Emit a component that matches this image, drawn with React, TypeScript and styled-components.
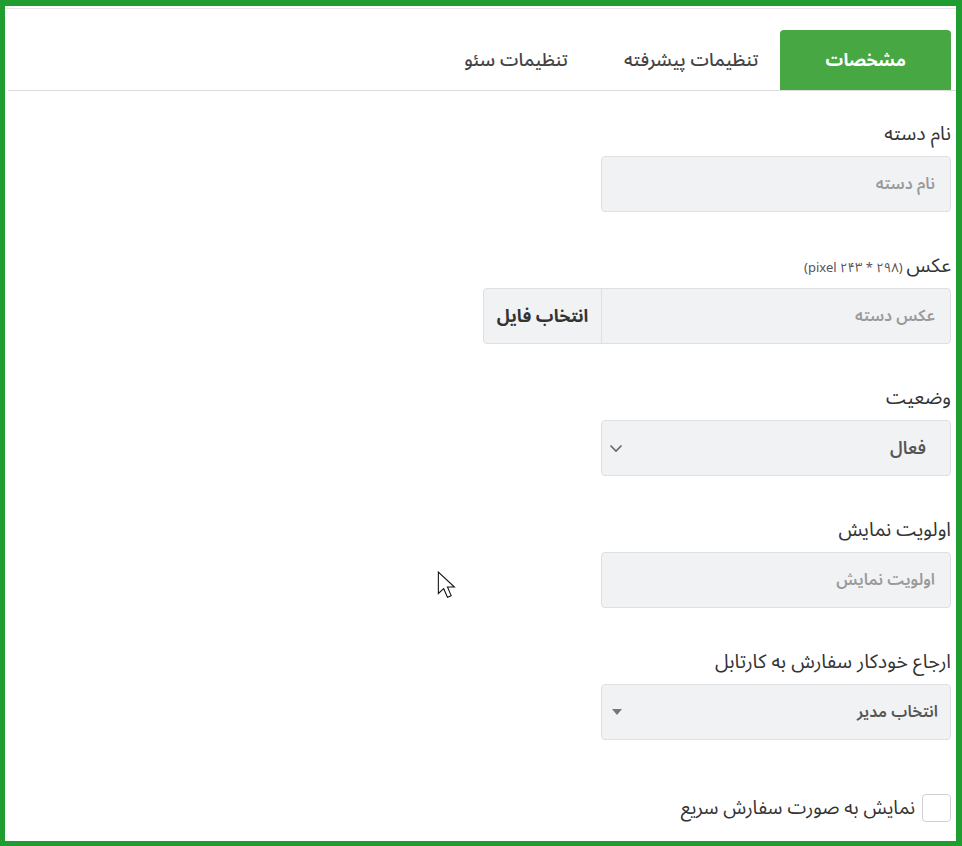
import * as React from 'react';
import styled, { createGlobalStyle } from 'styled-components';

const GlobalStyle = createGlobalStyle`
  html, body {
    margin: 0;
    padding: 0;
    background: #fff;
  }
  * {
    box-sizing: border-box;
  }
`;

const font = `"Noto Sans Arabic", "Noto Naskh Arabic", "DejaVu Sans", "Noto Sans", sans-serif`;

const Frame = styled.div`
  position: relative;
  width: 962px;
  height: 846px;
  border-style: solid;
  border-color: #1f9d30;
  border-width: 6px 6px 5px 5px;
  padding-top: 2px;
  overflow: hidden;
  font-family: ${font};
  direction: rtl;
`;

const Card = styled.div`
  border-top: 1px solid #e8e8e8;
  padding: 21px 5px 0 0;
`;

const TabBar = styled.div`
  display: flex;
  align-items: stretch;
  height: 61px;
  margin: 0 -5px 0 3px;
  padding-right: 5px;
  border-bottom: 1px solid #dcdcdc;
`;

const Tab = styled.div<{ $active?: boolean }>`
  display: flex;
  align-items: center;
  justify-content: center;
  height: 60px;
  padding: ${({ $active }) => ($active ? '0 45px' : '0 22px')};
  margin-left: ${({ $active }) => ($active ? '0' : '12px')};
  border-radius: 4px 4px 0 0;
  background: ${({ $active }) => ($active ? '#46a743' : 'transparent')};
  color: ${({ $active }) => ($active ? '#fff' : '#444')};
  font-size: ${({ $active }) => ($active ? '17.5px' : '18.5px')};
  font-weight: ${({ $active }) => ($active ? 700 : 500)};
  white-space: nowrap;
`;

const Form = styled.div`
  display: flex;
  flex-direction: column;
  gap: 42px;
  padding: 31px 0 0 0;
  width: 350px;
`;

const Group = styled.div``;

const Label = styled.div`
  height: 24px;
  line-height: 24px;
  margin-bottom: 10px;
  font-size: 19.5px;
  color: #333;
  white-space: nowrap;
`;

const Hint = styled.span`
  font-size: 13px;
  color: #555;
  margin-right: 4px;
`;

const Field = styled.div<{ $strong?: boolean; $joined?: boolean; $pr?: number; $pl?: number }>`
  display: flex;
  align-items: center;
  justify-content: space-between;
  width: 350px;
  height: 56px;
  padding: 0 ${({ $pr }) => $pr ?? 15}px 0 ${({ $pl }) => $pl ?? 14}px;
  background: #f1f2f4;
  border: 1px solid #dddfe2;
  border-radius: ${({ $joined }) => ($joined ? '0 4px 4px 0' : '4px')};
  font-size: 16px;
  font-weight: 600;
  color: ${({ $strong }) => ($strong ? '#555' : '#9a9a9a')};
  flex-shrink: 0;
`;

const InputRow = styled.div`
  display: flex;
  align-items: stretch;
`;

const FileButton = styled.div`
  display: flex;
  align-items: center;
  justify-content: center;
  width: 119px;
  height: 56px;
  margin-right: -1px;
  background: #f1f2f4;
  border: 1px solid #dddfe2;
  border-radius: 4px 0 0 4px;
  font-size: 17.5px;
  font-weight: 700;
  color: #333;
  white-space: nowrap;
  flex-shrink: 0;
`;

const SelectValue = styled.span<{ $size: number }>`
  font-size: ${({ $size }) => $size}px;
`;

const CheckRow = styled.label`
  display: flex;
  align-items: center;
  gap: 7px;
  height: 28px;
  margin-top: 12px;
  font-size: 19px;
  color: #333;
  white-space: nowrap;
`;

const Box = styled.span`
  width: 29px;
  height: 28px;
  border: 1px solid #cfd1d4;
  border-radius: 4px;
  background: #fff;
  flex-shrink: 0;
`;

const Pointer = styled.svg`
  position: absolute;
  left: 432px;
  top: 565px;
`;

const Chevron = () => (
  <svg width="14" height="9" viewBox="0 0 14 9">
    <path d="M1.5 1.5 L7 7 L12.5 1.5" fill="none" stroke="#666" strokeWidth="1.6" />
  </svg>
);

const Caret = () => (
  <svg width="10" height="6" viewBox="0 0 10 6">
    <path d="M0 0 H10 L5 6 Z" fill="#777" />
  </svg>
);

export default function App() {
  return (
    <>
      <GlobalStyle />
      <Frame>
        <Card>
          <TabBar>
            <Tab $active>مشخصات</Tab>
            <Tab>تنظیمات پیشرفته</Tab>
            <Tab>تنظیمات سئو</Tab>
          </TabBar>
          <Form>
            <Group>
              <Label>نام دسته</Label>
              <Field>نام دسته</Field>
            </Group>
            <Group>
              <Label>
                عکس<Hint>(۲۹۸ * ۲۴۳ pixel)</Hint>
              </Label>
              <InputRow>
                <Field $joined>عکس دسته</Field>
                <FileButton>انتخاب فایل</FileButton>
              </InputRow>
            </Group>
            <Group>
              <Label>وضعیت</Label>
              <Field $strong $pr={24} $pl={7}>
                <SelectValue $size={17.5}>فعال</SelectValue>
                <Chevron />
              </Field>
            </Group>
            <Group>
              <Label>اولویت نمایش</Label>
              <Field>اولویت نمایش</Field>
            </Group>
            <Group>
              <Label>ارجاع خودکار سفارش به کارتابل</Label>
              <Field $strong $pr={12} $pl={10}>
                <SelectValue $size={16}>انتخاب مدیر</SelectValue>
                <Caret />
              </Field>
            </Group>
            <CheckRow>
              <Box />
              نمایش به صورت سفارش سریع
            </CheckRow>
          </Form>
        </Card>
        <Pointer width="22" height="30" viewBox="0 0 20 28">
          <path
            d="M1 1 L1 21 L6 16.5 L9.5 24.5 L13 23 L9.5 15 L16 15 Z"
            fill="#fff"
            stroke="#111"
            strokeWidth="1"
            strokeLinejoin="miter"
          />
        </Pointer>
      </Frame>
    </>
  );
}
